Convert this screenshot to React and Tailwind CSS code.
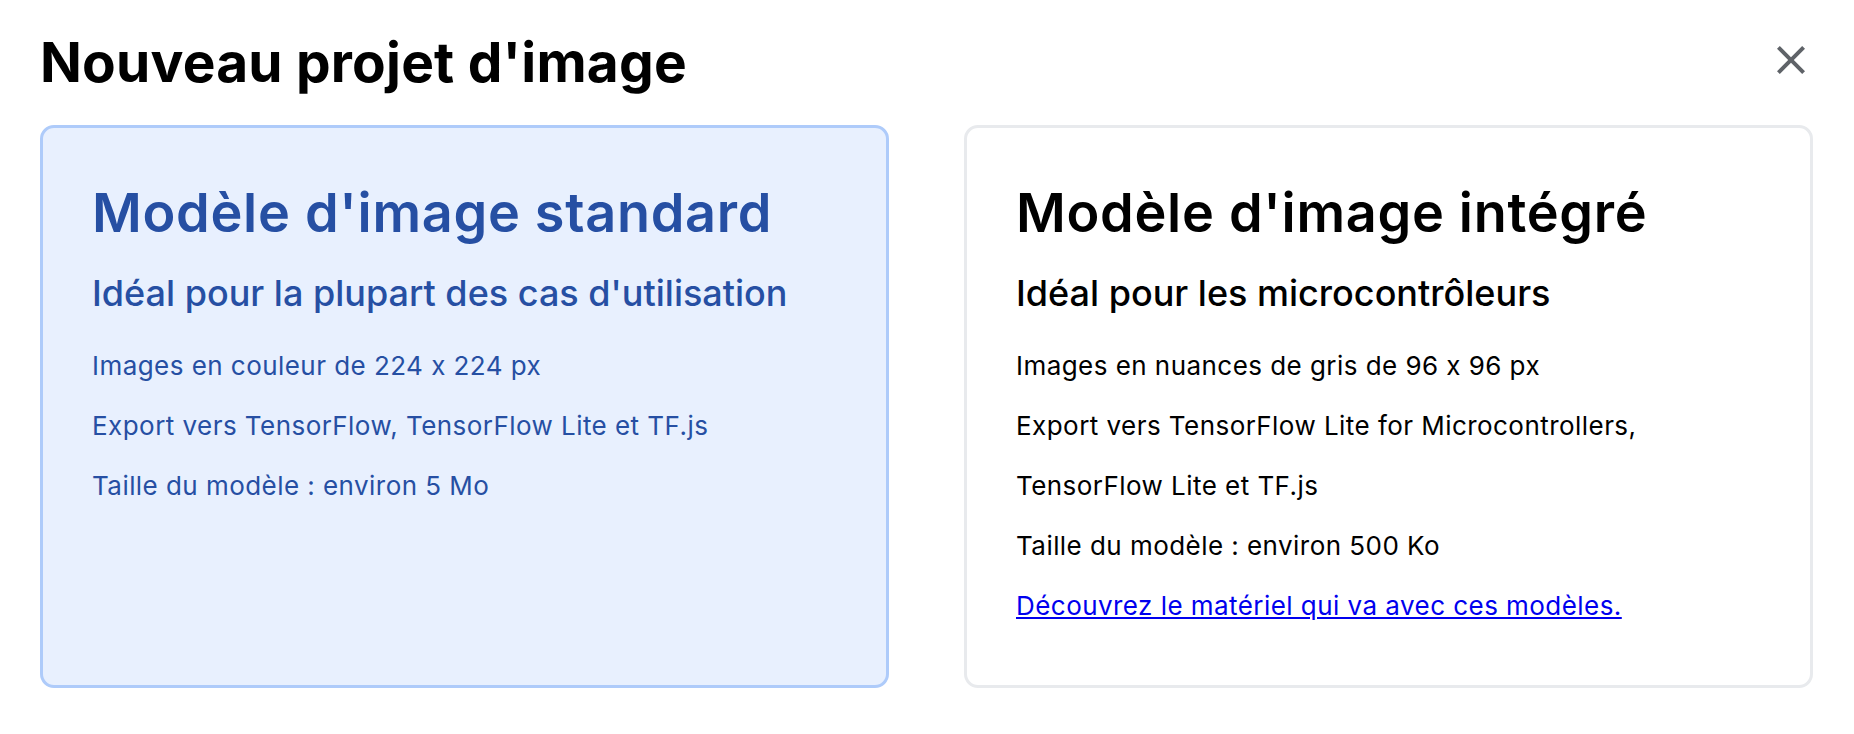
import React from "react";

function CloseIcon() {
  return (
    <svg viewBox="0 0 24 24" width="48" height="48" fill="#5f6368" aria-hidden="true">
      <path d="M19 6.41L17.59 5 12 10.59 6.41 5 5 6.41 10.59 12 5 17.59 6.41 19 12 13.41 17.59 19 19 17.59 13.41 12z" />
    </svg>
  );
}

export default function App() {
  return (
    <div className="w-[1854px] h-[734px] bg-white overflow-hidden [font-family:Inter,Roboto,sans-serif] [font-feature-settings:'calt'_0]">
      <div className="flex items-start justify-between pl-[40px] pr-[39px] pt-[34px]">
        <h1 className="text-[55px] leading-[56px] font-bold text-black tracking-[0.2px]">Nouveau projet d'image</h1>
        <button className="w-[48px] h-[48px] mt-[2px] flex items-center justify-center">
          <CloseIcon />
        </button>
      </div>
      <div className="grid grid-cols-2 gap-[75px] pl-[40px] pr-[41px] mt-[35px]">
        <div className="rounded-[14px] border-[3px] border-[#aecbfa] bg-[#e8f0fe] pl-[49px] pr-[30px] pt-[58px] pb-[49px] text-[#264fa3]">
          <h2 className="text-[54px] leading-[54px] font-semibold tracking-[0.7px]">Modèle d'image standard</h2>
          <h3 className="text-[36px] leading-[36px] font-medium mt-[35px]">Idéal pour la plupart des cas d'utilisation</h3>
          <ul className="mt-[25px] text-[26px] leading-[60px] tracking-[0.45px]">
            <li>Images en couleur de 224 x 224 px</li>
            <li>Export vers TensorFlow, TensorFlow Lite et TF.js</li>
            <li>Taille du modèle : environ 5 Mo</li>
          </ul>
        </div>
        <div className="rounded-[14px] border-[3px] border-[#e8eaed] bg-white pl-[49px] pr-[30px] pt-[58px] pb-[49px] text-black">
          <h2 className="text-[54px] leading-[54px] font-semibold tracking-[0.7px]">Modèle d'image intégré</h2>
          <h3 className="text-[36px] leading-[36px] font-medium mt-[35px]">Idéal pour les microcontrôleurs</h3>
          <ul className="mt-[25px] text-[26px] leading-[60px] tracking-[0.45px]">
            <li>Images en nuances de gris de 96 x 96 px</li>
            <li>
              Export vers TensorFlow Lite for Microcontrollers,
              <br />
              TensorFlow Lite et TF.js
            </li>
            <li>Taille du modèle : environ 500 Ko</li>
            <li>
              <a href="#" className="text-[#0000ee] underline">Découvrez le matériel qui va avec ces modèles.</a>
            </li>
          </ul>
        </div>
      </div>
    </div>
  );
}
